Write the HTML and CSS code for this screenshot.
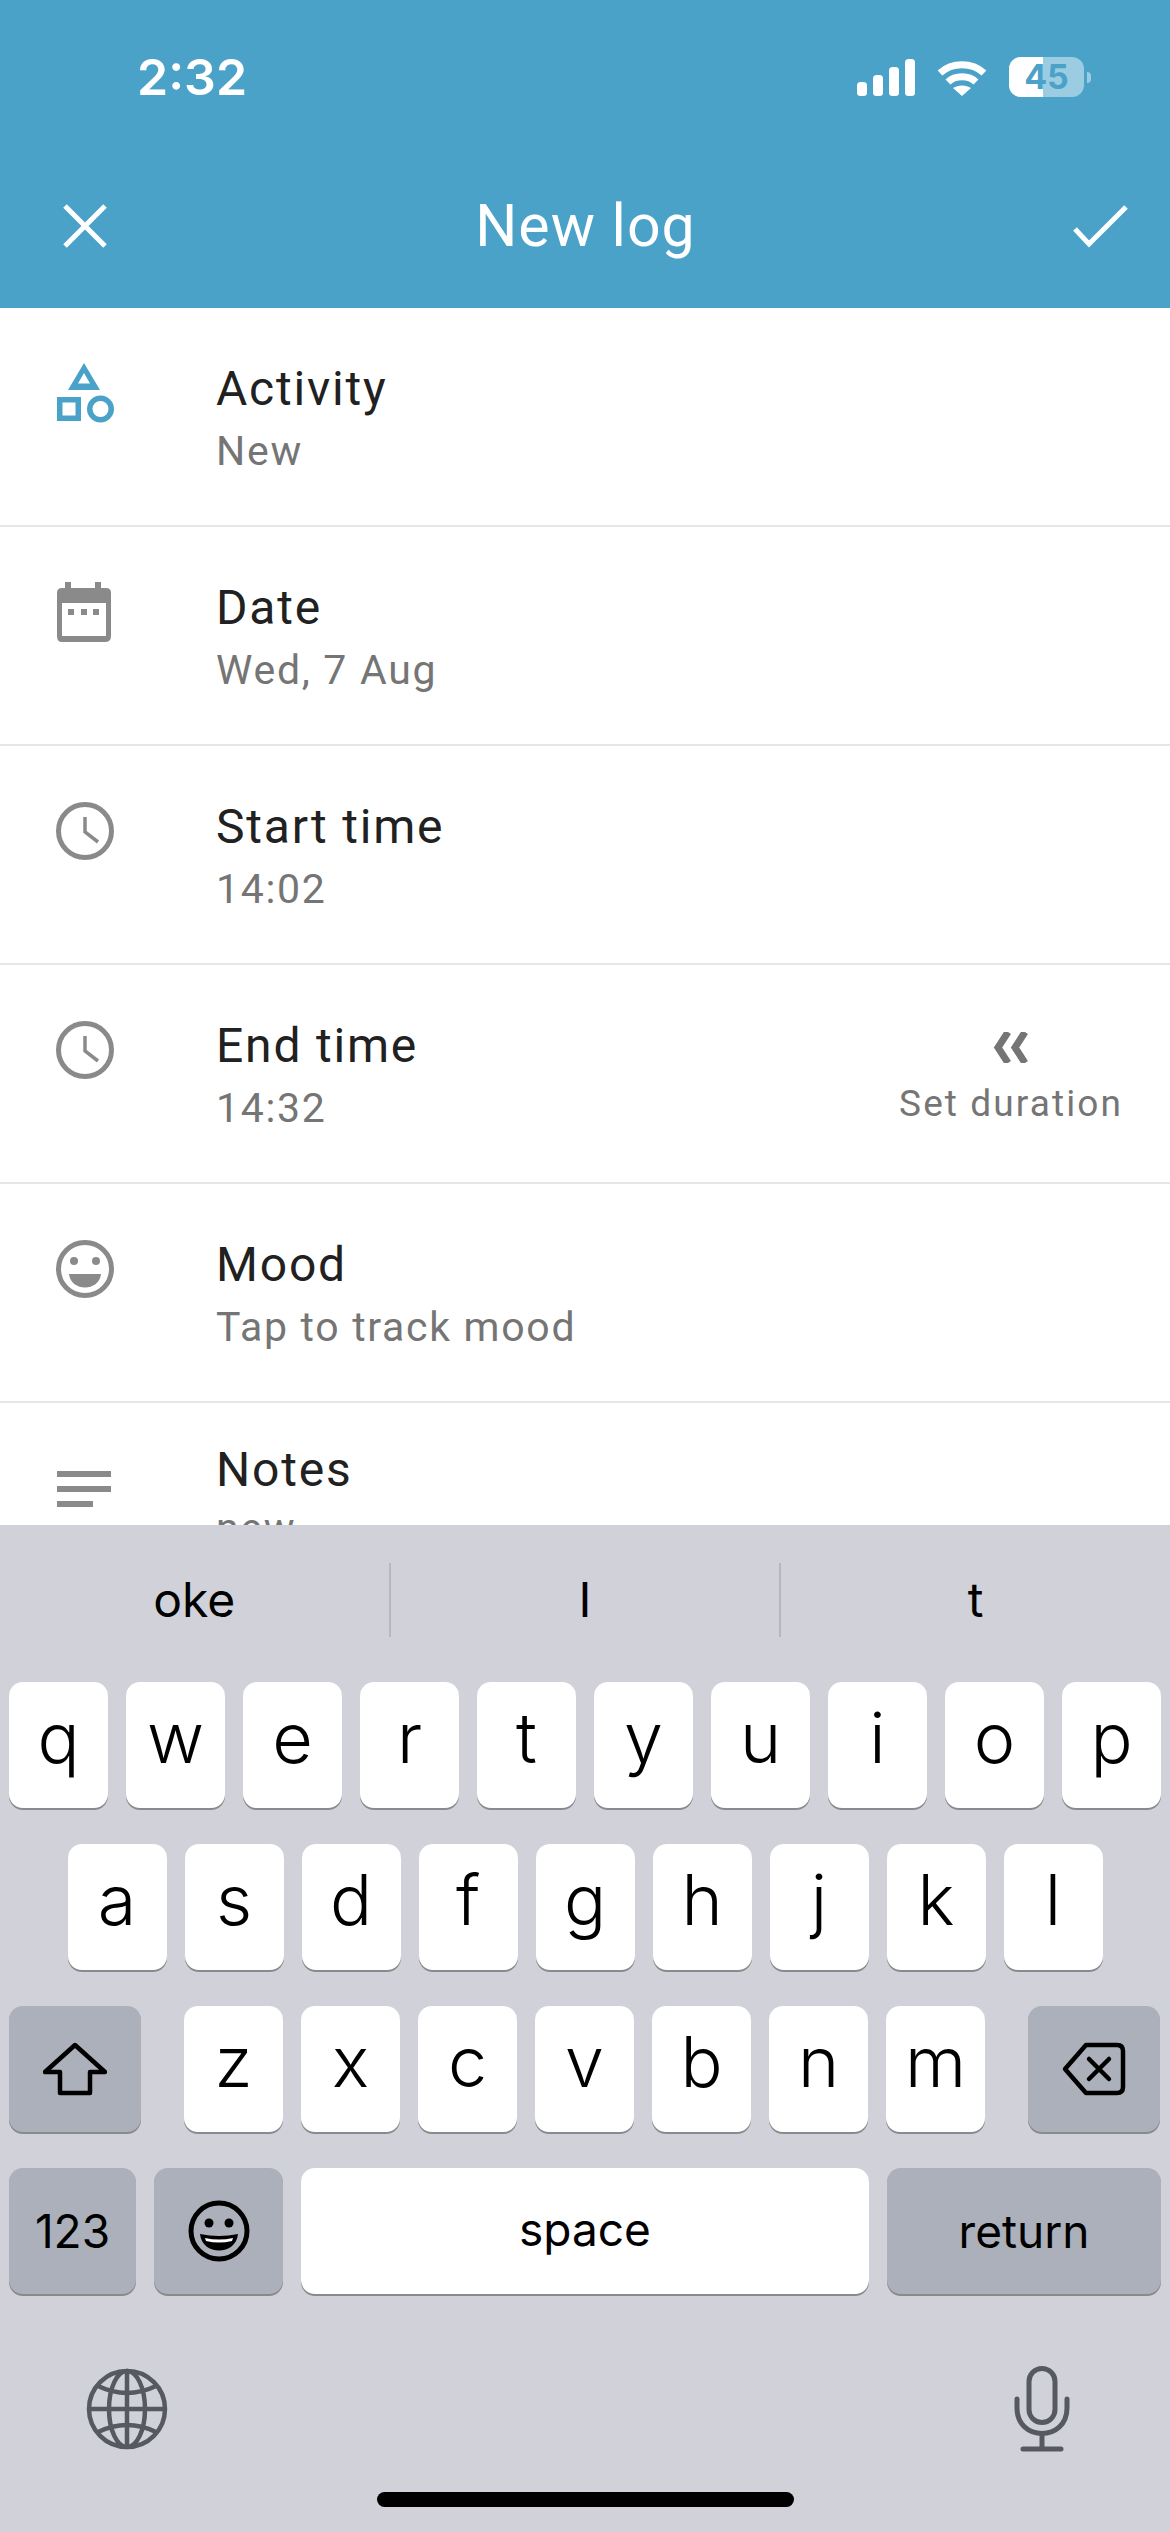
FILE: index.html
```html
<!DOCTYPE html>
<html lang="en">
<head>
    <meta charset="UTF-8">
    <meta name="viewport" content="width=device-width, initial-scale=1.0">
    <title>New log</title>
    <link rel="stylesheet" href="styles.css">
</head>
<body>
    <header class="header">
        <div class="status">
            <span class="clock">2:32</span>
            <div class="status-icons">
                <svg width="58" height="37" viewBox="0 0 58 37" fill="#fff">
                    <rect x="0" y="23" width="10" height="14" rx="3.500"/>
                    <rect x="16" y="16" width="10" height="21" rx="3.500"/>
                    <rect x="32" y="8" width="10" height="29" rx="3.500"/>
                    <rect x="48" y="0" width="10" height="37" rx="3.500"/>
                </svg>
                <svg class="wifi" width="50" height="37" viewBox="0 0 50 37" fill="none" stroke="#fff" stroke-width="7">
                    <path d="M3 14 C15 3 35 3 47 14"/>
                    <path d="M11 23 C18 16 32 16 39 23"/>
                    <path d="M25 37 L16 29 C21 25.500 29 25.500 34 29 Z" fill="#fff" stroke="none"/>
                </svg>
                <div class="battery">
                    <span class="battery-fill"></span>
                    <span class="battery-num">45</span>
                </div>
                <span class="battery-nub"></span>
            </div>
        </div>
        <div class="toolbar">
            <svg width="60" height="60" viewBox="0 0 60 60" stroke="#fff" stroke-width="5" fill="none">
                <path d="M10 10 L50 50 M50 10 L10 50"/>
            </svg>
            <h1>New log</h1>
            <svg width="60" height="60" viewBox="0 0 60 60" stroke="#fff" stroke-width="5" fill="none">
                <path d="M5 33 L19 48 L56 11"/>
            </svg>
        </div>
    </header>

    <main class="list">
        <div class="row">
            <svg class="row-icon" width="60" height="60" viewBox="0 0 60 60">
                <path d="M29 0 L45 27 H13 Z M29 10 L23 20.500 H35 Z" fill="#4ba2c9" fill-rule="evenodd"/>
                <rect x="4.750" y="36.750" width="18.500" height="18.500" fill="none" stroke="#4ba2c9" stroke-width="5.500"/>
                <circle cx="45.500" cy="46" r="10.750" fill="none" stroke="#4ba2c9" stroke-width="5.500"/>
            </svg>
            <div class="row-text">
                <div class="label">Activity</div>
                <div class="sub">New</div>
            </div>
        </div>
        <div class="row">
            <svg class="row-icon" width="60" height="60" viewBox="0 0 60 60" fill="#8a8a8a">
                <path fill-rule="evenodd" d="M10 6 V0 H16 V6 H40 V0 H46 V6 H51 Q56 6 56 11 V54 Q56 60 50 60 H7 Q2 60 2 54 V11 Q2 6 7 6 Z M7 21 V54 H51 V21 Z"/>
                <rect x="13" y="27" width="6" height="6"/>
                <rect x="26" y="27" width="6" height="6"/>
                <rect x="38" y="27" width="6" height="6"/>
            </svg>
            <div class="row-text">
                <div class="label">Date</div>
                <div class="sub">Wed, 7 Aug</div>
            </div>
        </div>
        <div class="row">
            <svg class="row-icon" width="60" height="60" viewBox="0 0 60 60" fill="none" stroke="#8a8a8a">
                <circle cx="30" cy="30" r="26.500" stroke-width="5"/>
                <path d="M30 16 V31 L43 41" stroke-width="3.500"/>
            </svg>
            <div class="row-text">
                <div class="label">Start time</div>
                <div class="sub">14:02</div>
            </div>
        </div>
        <div class="row">
            <svg class="row-icon" width="60" height="60" viewBox="0 0 60 60" fill="none" stroke="#8a8a8a">
                <circle cx="30" cy="30" r="26.500" stroke-width="5"/>
                <path d="M30 16 V31 L43 41" stroke-width="3.500"/>
            </svg>
            <div class="row-text">
                <div class="label">End time</div>
                <div class="sub">14:32</div>
            </div>
            <div class="duration">
                <svg width="36" height="31" viewBox="0 0 36 31" fill="none" stroke="#757575" stroke-width="7">
                    <path d="M15 0 L5 15.500 L15 31 M32 0 L22 15.500 L32 31"/>
                </svg>
                <span>Set duration</span>
            </div>
        </div>
        <div class="row">
            <svg class="row-icon" width="60" height="60" viewBox="0 0 60 60" fill="#8a8a8a">
                <circle cx="30" cy="30" r="26.500" fill="none" stroke="#8a8a8a" stroke-width="5"/>
                <circle cx="19" cy="22" r="4"/>
                <circle cx="41" cy="22" r="4"/>
                <path d="M14 35 H46 C44 53 16 53 14 35 Z"/>
            </svg>
            <div class="row-text">
                <div class="label">Mood</div>
                <div class="sub">Tap to track mood</div>
            </div>
        </div>
        <div class="row notes">
            <svg class="row-icon" width="60" height="60" viewBox="0 0 60 60" fill="#8a8a8a">
                <rect x="2" y="12" width="54" height="6"/>
                <rect x="2" y="27" width="54" height="6"/>
                <rect x="2" y="42" width="36" height="6"/>
            </svg>
            <div class="row-text">
                <div class="label">Notes</div>
                <div class="sub">new</div>
            </div>
        </div>
    </main>

    <section class="keyboard">
        <div class="suggestions">
            <span>oke</span>
            <span>I</span>
            <span>t</span>
        </div>
        <div class="key-row">
            <div class="key">q</div><div class="key">w</div><div class="key">e</div><div class="key">r</div><div class="key">t</div>
            <div class="key">y</div><div class="key">u</div><div class="key">i</div><div class="key">o</div><div class="key">p</div>
        </div>
        <div class="key-row center">
            <div class="key">a</div><div class="key">s</div><div class="key">d</div><div class="key">f</div><div class="key">g</div>
            <div class="key">h</div><div class="key">j</div><div class="key">k</div><div class="key">l</div>
        </div>
        <div class="key-row">
            <div class="key dark shift">
                <svg width="64" height="54" viewBox="0 0 64 54" fill="none" stroke="#000" stroke-width="4.500" stroke-linejoin="round">
                    <path d="M32 3 L62 30 H47 V51 H17 V30 H2 Z"/>
                </svg>
            </div>
            <div class="key letters-start">z</div><div class="key">x</div><div class="key">c</div><div class="key">v</div>
            <div class="key">b</div><div class="key">n</div><div class="key">m</div>
            <div class="key dark shift letters-end">
                <svg width="64" height="54" viewBox="0 0 64 54" fill="none" stroke="#000" stroke-width="4.500" stroke-linejoin="round" stroke-linecap="round">
                    <path d="M3 27 L24 3 H55 Q61 3 61 9 V45 Q61 51 55 51 H24 Z"/>
                    <path d="M27 17 L47 37 M47 17 L27 37"/>
                </svg>
            </div>
        </div>
        <div class="key-row">
            <div class="key dark small num">123</div>
            <div class="key dark emoji">
                <svg width="62" height="62" viewBox="0 0 62 62">
                    <circle cx="31" cy="31" r="28" fill="none" stroke="#000" stroke-width="5"/>
                    <circle cx="21" cy="23" r="4.500"/>
                    <circle cx="41" cy="23" r="4.500"/>
                    <path d="M12 34 Q31 38 50 34 C48 56 14 56 12 34 Z"/>
                    <path d="M17 38 Q31 41 45 38 L44 41 Q31 44 18 41 Z" fill="#fff"/>
                </svg>
            </div>
            <div class="key small space">space</div>
            <div class="key dark small return">return</div>
        </div>
        <div class="kb-bottom">
            <svg width="82" height="82" viewBox="0 0 82 82" fill="none" stroke="#565a60" stroke-width="4.500">
                <circle cx="41" cy="41" r="38"/>
                <ellipse cx="41" cy="41" rx="18" ry="38"/>
                <path d="M41 3 V79 M3 41 H79"/>
                <path d="M12 18 Q41 32 70 18 M12 64 Q41 50 70 64"/>
            </svg>
            <svg width="56" height="86" viewBox="0 0 56 86" fill="none" stroke="#565a60" stroke-width="5" stroke-linecap="round">
                <rect x="15" y="2.500" width="26" height="54" rx="13"/>
                <path d="M3 33 V42 C3 76 53 76 53 42 V33"/>
                <path d="M28 68 V83 M9 83 H47"/>
            </svg>
        </div>
        <div class="home-bar"></div>
    </section>
</body>
</html>
```
FILE: styles.css
```css
* { box-sizing: border-box; }
html, body { margin: 0; padding: 0; }
body { width: 1170px; height: 2532px; display: flex; flex-direction: column; overflow: hidden; background: white; font-family: Roboto, sans-serif; }

.header { height: 308px; background: #4ba2c9; color: white; flex-shrink: 0; }
.status { height: 154px; padding: 0 79px 0 137px; display: flex; align-items: center; justify-content: space-between; }
.clock { font-family: Inter, sans-serif; font-size: 50px; font-weight: 600; }
.status-icons { display: flex; align-items: center; }
.wifi { margin-left: 22px; }
.battery { position: relative; margin-left: 22px; width: 75px; height: 40px; border-radius: 12px; background: rgba(255,255,255,0.45); overflow: hidden; text-align: center; }
.battery-fill { position: absolute; left: 0; top: 0; bottom: 0; width: 34px; background: white; }
.battery-num { position: relative; font-family: Inter, sans-serif; font-size: 34px; font-weight: 700; line-height: 40px; color: #4ba2c9; }
.battery-nub { width: 4px; height: 11px; margin-left: 3px; border-radius: 0 5px 5px 0; background: rgba(255,255,255,0.45); }

.toolbar { height: 143px; padding: 0 40px 0 55px; display: flex; align-items: center; justify-content: space-between; }
.toolbar h1 { margin: 0 14px 0 0; font-size: 59px; font-weight: 400; letter-spacing: 1px; }

.list { flex: 1; overflow: hidden; }
.row { height: 219px; padding: 55px 47px 0 55px; display: flex; border-bottom: 2px solid #e6e6e6; }
.row-icon { flex-shrink: 0; }
.row-text { flex: 1; margin-left: 101px; margin-top: -2px; }
.label { font-size: 48px; line-height: 56px; color: #212121; letter-spacing: 1.800px; }
.sub { margin-top: 9px; font-size: 41px; line-height: 50px; color: #757575; letter-spacing: 1.700px; }
.duration { display: flex; flex-direction: column; align-items: center; gap: 20px; margin-top: 12px; font-size: 37px; line-height: 42px; color: #757575; letter-spacing: 2.100px; }
.notes .row-icon { margin-top: 1px; }
.notes .row-text { margin-top: -16px; }
.notes .sub { margin-top: 5px; }

.keyboard { height: 1007px; flex-shrink: 0; padding: 0 9px; background: #d0d1d9; font-family: Inter, sans-serif; color: black; }
.suggestions { height: 157px; margin: 0 -9px; padding-bottom: 8px; display: flex; align-items: center; }
.suggestions span { flex: 1; height: 74px; line-height: 74px; text-align: center; font-size: 48px; border-left: 2px solid #b6b8c0; }
.suggestions span:first-child { border-left: none; }
.key-row { display: flex; gap: 18px; margin-bottom: 36px; }
.key-row.center { justify-content: center; }
.key { width: 99px; height: 126px; padding-bottom: 15px; display: flex; align-items: center; justify-content: center; background: white; border-radius: 14px; box-shadow: 0 2px 0 #898a8e; font-size: 70px; font-weight: 300; }
.key.dark { background: #abb0ba; padding-bottom: 0; }
.key.small { font-size: 46px; font-weight: 400; }
.shift { width: 132px; }
.letters-start { margin-left: 25px; }
.letters-end { margin-left: 25px; }
.num { width: 127px; font-size: 48px; }
.emoji { width: 129px; }
.space { width: 568px; padding-bottom: 4px; }
.return { width: 274px; }

.kb-bottom { padding: 36px 91px 0 77px; display: flex; justify-content: space-between; align-items: center; margin-bottom: 40px; }
.home-bar { width: 417px; height: 15px; margin: 0 auto; background: black; border-radius: 8px; }
```
